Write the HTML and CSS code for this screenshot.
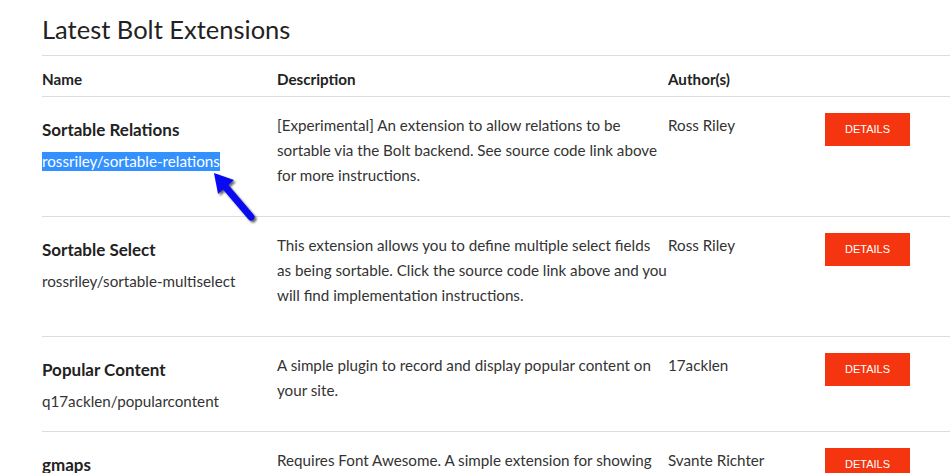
FILE: index.html
```html
<!DOCTYPE html>
<html lang="en">
<head>
    <meta charset="UTF-8">
    <meta name="viewport" content="width=device-width, initial-scale=1.0">
    <title>Latest Bolt Extensions</title>
    <link rel="stylesheet" href="styles.css">
</head>

<body>
    <div class="container">
        <h1 class="title">Latest Bolt Extensions</h1>

        <div class="extensions">
            <div class="row head">
                <div class="cell">Name</div>
                <div class="cell">Description</div>
                <div class="cell">Author(s)</div>
                <div class="cell"></div>
            </div>

            <div class="row">
                <div class="cell name">
                    <h4>Sortable Relations</h4>
                    <span class="package selected">rossriley/sortable-relations</span>
                    <svg class="pointer" width="60" height="60" viewBox="0 0 60 60">
                        <line x1="21" y1="17" x2="49" y2="50" stroke="#0a0af2" stroke-width="7" stroke-linecap="round" />
                        <polygon points="12,6 32,13 16,27" fill="#0a0af2" />
                    </svg>
                </div>
                <div class="cell">
                    <p class="desc">[Experimental] An extension to allow relations to be<br>sortable via the Bolt backend. See source code link above<br>for more instructions.</p>
                </div>
                <div class="cell">Ross Riley</div>
                <div class="cell"><a class="button" href="#">Details</a></div>
            </div>

            <div class="row">
                <div class="cell name">
                    <h4>Sortable Select</h4>
                    <span class="package">rossriley/sortable-multiselect</span>
                </div>
                <div class="cell">
                    <p class="desc">This extension allows you to define multiple select fields<br>as being sortable. Click the source code link above and you<br>will find implementation instructions.</p>
                </div>
                <div class="cell">Ross Riley</div>
                <div class="cell"><a class="button" href="#">Details</a></div>
            </div>

            <div class="row">
                <div class="cell name">
                    <h4>Popular Content</h4>
                    <span class="package">q17acklen/popularcontent</span>
                </div>
                <div class="cell">
                    <p class="desc">A simple plugin to record and display popular content on<br>your site.</p>
                </div>
                <div class="cell">17acklen</div>
                <div class="cell"><a class="button" href="#">Details</a></div>
            </div>

            <div class="row">
                <div class="cell name">
                    <h4>gmaps</h4>
                    <span class="package">svanterichter/gmaps</span>
                </div>
                <div class="cell">
                    <p class="desc">Requires Font Awesome. A simple extension for showing<br>Google maps in your content.</p>
                </div>
                <div class="cell">Svante Richter</div>
                <div class="cell"><a class="button" href="#">Details</a></div>
            </div>
        </div>
    </div>
</body>
</html>
```

FILE: styles.css
```css
body {
    margin: 0;
    padding: 0;
    background-color: #fff;
    color: #333;
    font-family: Lato, "Open Sans", sans-serif;
    overflow: hidden;
}

.container {
    padding-left: 42px;
    width: 960px;
}

.title {
    margin: 13px 0 0;
    padding-bottom: 10px;
    font-size: 25.5px;
    line-height: 32px;
    font-weight: 400;
    color: #222;
    border-bottom: 1px solid #ddd;
}

.row {
    display: grid;
    grid-template-columns: 235px 391px 157px 1fr;
    border-bottom: 1px solid #ddd;
    font-size: 15.2px;
    line-height: 25px;
}

.row .cell {
    padding: 16px 0;
}

.head .cell {
    padding: 11px 0 4px;
    font-weight: 700;
    color: #222;
}

.name {
    position: relative;
}

.name h4 {
    margin: 0;
    font-size: 17px;
    line-height: 34px;
    font-weight: 700;
    color: #222;
}

.package {
    display: inline-block;
    line-height: 19px;
    margin-top: 5px;
}

.selected {
    background-color: #3390ff;
    color: #fff;
}

.desc {
    margin: 0 0 12px;
}

.button {
    display: block;
    width: 85px;
    height: 33px;
    line-height: 33px;
    background-color: #f5350f;
    color: #fff;
    text-align: center;
    text-decoration: none;
    text-transform: uppercase;
    font-family: "Liberation Sans", Arial, sans-serif;
    font-size: 11px;
}

.pointer {
    position: absolute;
    left: 160px;
    top: 70px;
    filter: drop-shadow(2px 2px 1px rgba(0, 0, 0, 0.6));
}
```
